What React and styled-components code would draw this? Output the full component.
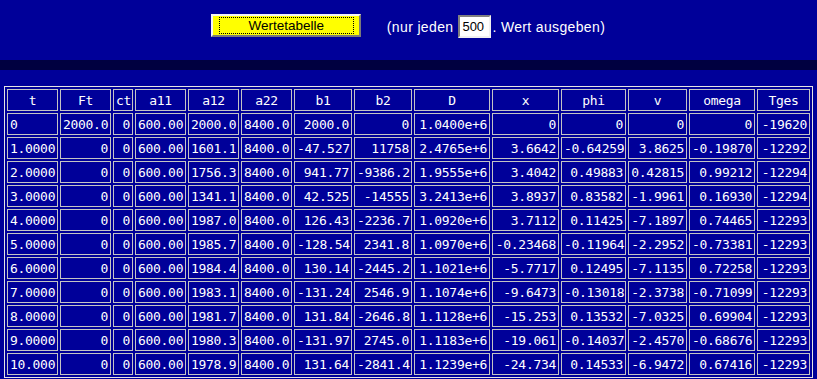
import React from "react";
import styled, { createGlobalStyle } from "styled-components";

const GlobalStyle = createGlobalStyle`
  html, body {
    margin: 0;
    padding: 0;
    background: #000099;
  }
`;

const Page = styled.div`
  width: 100%;
  background: #000099;
  font-family: "Liberation Sans", Arial, sans-serif;
`;

const Controls = styled.div`
  box-sizing: border-box;
  height: 60px;
  padding-top: 14px;
  padding-right: 1px;
  display: flex;
  justify-content: center;
  align-items: flex-start;
  gap: 26px;
`;

const TableButton = styled.button`
  box-sizing: border-box;
  width: 150px;
  height: 23px;
  padding: 1px;
  margin: 0;
  background: #ffff00;
  border: 2px solid;
  border-color: #f4f4f4 #7a7a7a #7a7a7a #f4f4f4;
  display: flex;
  align-items: stretch;
  justify-content: stretch;
  cursor: pointer;
`;

const FocusRing = styled.span`
  flex: 1;
  margin: 0 4px 0 5px;
  border: 1px dotted #000;
  display: flex;
  align-items: center;
  justify-content: center;
  font-family: "Liberation Sans", Arial, sans-serif;
  font-size: 13.5px;
  color: #000;
  line-height: 1;
`;

const Hint = styled.div`
  display: flex;
  align-items: center;
  height: 23px;
  margin-top: 1px;
  color: #ffffff;
  font-size: 14px;
  letter-spacing: 0.35px;
  white-space: pre;
`;

const StepInput = styled.input`
  box-sizing: border-box;
  width: 33px;
  height: 23px;
  margin: 0 1px 0 5px;
  padding: 0 2px;
  border: 2px solid;
  border-color: #808080 #f0f0f0 #f0f0f0 #808080;
  background: #ffffff;
  color: #000;
  font-family: "Liberation Sans", Arial, sans-serif;
  font-size: 13px;
  letter-spacing: 0;
  outline: none;
`;

const Band = styled.div`
  height: 10px;
  background: #000040;
`;

const TableArea = styled.div`
  padding: 16px 4px 0;
`;

const Grid = styled.table`
  width: 809px;
  table-layout: fixed;
  border-collapse: separate;
  border-spacing: 2px;
  border: 1px solid #e4e4e4;
  font-family: "DejaVu Sans Mono", "Liberation Mono", monospace;
  font-size: 13px;
  letter-spacing: -0.3px;
  color: #ffffff;
`;

const Cell = styled.td`
  box-sizing: border-box;
  border: 1px solid #c4c4c4;
  padding: 1px 2px 0;
  line-height: 19px;
  white-space: nowrap;
  overflow: hidden;
  text-align: ${(p) => p.$align || "right"};
  font-weight: normal;
`;

const columns = [
  { name: "t", width: 51, align: "left" },
  { name: "Ft", width: 51 },
  { name: "ct", width: 20 },
  { name: "a11", width: 51 },
  { name: "a12", width: 51 },
  { name: "a22", width: 51 },
  { name: "b1", width: 58 },
  { name: "b2", width: 58 },
  { name: "D", width: 76 },
  { name: "x", width: 67 },
  { name: "phi", width: 65 },
  { name: "v", width: 59 },
  { name: "omega", width: 66 },
  { name: "Tges", width: 53 },
];

const rows = [
  ["0", "2000.0", "0", "600.00", "2000.0", "8400.0", "2000.0", "0", "1.0400e+6", "0", "0", "0", "0", "-19620"],
  ["1.0000", "0", "0", "600.00", "1601.1", "8400.0", "-47.527", "11758", "2.4765e+6", "3.6642", "-0.64259", "3.8625", "-0.19870", "-12292"],
  ["2.0000", "0", "0", "600.00", "1756.3", "8400.0", "941.77", "-9386.2", "1.9555e+6", "3.4042", "0.49883", "0.42815", "0.99212", "-12294"],
  ["3.0000", "0", "0", "600.00", "1341.1", "8400.0", "42.525", "-14555", "3.2413e+6", "3.8937", "0.83582", "-1.9961", "0.16930", "-12294"],
  ["4.0000", "0", "0", "600.00", "1987.0", "8400.0", "126.43", "-2236.7", "1.0920e+6", "3.7112", "0.11425", "-7.1897", "0.74465", "-12293"],
  ["5.0000", "0", "0", "600.00", "1985.7", "8400.0", "-128.54", "2341.8", "1.0970e+6", "-0.23468", "-0.11964", "-2.2952", "-0.73381", "-12293"],
  ["6.0000", "0", "0", "600.00", "1984.4", "8400.0", "130.14", "-2445.2", "1.1021e+6", "-5.7717", "0.12495", "-7.1135", "0.72258", "-12293"],
  ["7.0000", "0", "0", "600.00", "1983.1", "8400.0", "-131.24", "2546.9", "1.1074e+6", "-9.6473", "-0.13018", "-2.3738", "-0.71099", "-12293"],
  ["8.0000", "0", "0", "600.00", "1981.7", "8400.0", "131.84", "-2646.8", "1.1128e+6", "-15.253", "0.13532", "-7.0325", "0.69904", "-12293"],
  ["9.0000", "0", "0", "600.00", "1980.3", "8400.0", "-131.97", "2745.0", "1.1183e+6", "-19.061", "-0.14037", "-2.4570", "-0.68676", "-12293"],
  ["10.000", "0", "0", "600.00", "1978.9", "8400.0", "131.64", "-2841.4", "1.1239e+6", "-24.734", "0.14533", "-6.9472", "0.67416", "-12293"],
];

export default function App() {
  return (
    <Page>
      <GlobalStyle />
      <Controls>
        <TableButton type="button">
          <FocusRing>Wertetabelle</FocusRing>
        </TableButton>
        <Hint>
          (nur jeden
          <StepInput defaultValue="500" />
          . Wert ausgeben)
        </Hint>
      </Controls>
      <Band />
      <TableArea>
        <Grid>
          <colgroup>
            {columns.map((c) => (
              <col key={c.name} style={{ width: c.width }} />
            ))}
          </colgroup>
          <thead>
            <tr>
              {columns.map((c) => (
                <Cell as="th" key={c.name} $align="center">
                  {c.name}
                </Cell>
              ))}
            </tr>
          </thead>
          <tbody>
            {rows.map((r, i) => (
              <tr key={i}>
                {r.map((v, j) => (
                  <Cell key={j} $align={columns[j].align}>
                    {v}
                  </Cell>
                ))}
              </tr>
            ))}
          </tbody>
        </Grid>
      </TableArea>
    </Page>
  );
}
